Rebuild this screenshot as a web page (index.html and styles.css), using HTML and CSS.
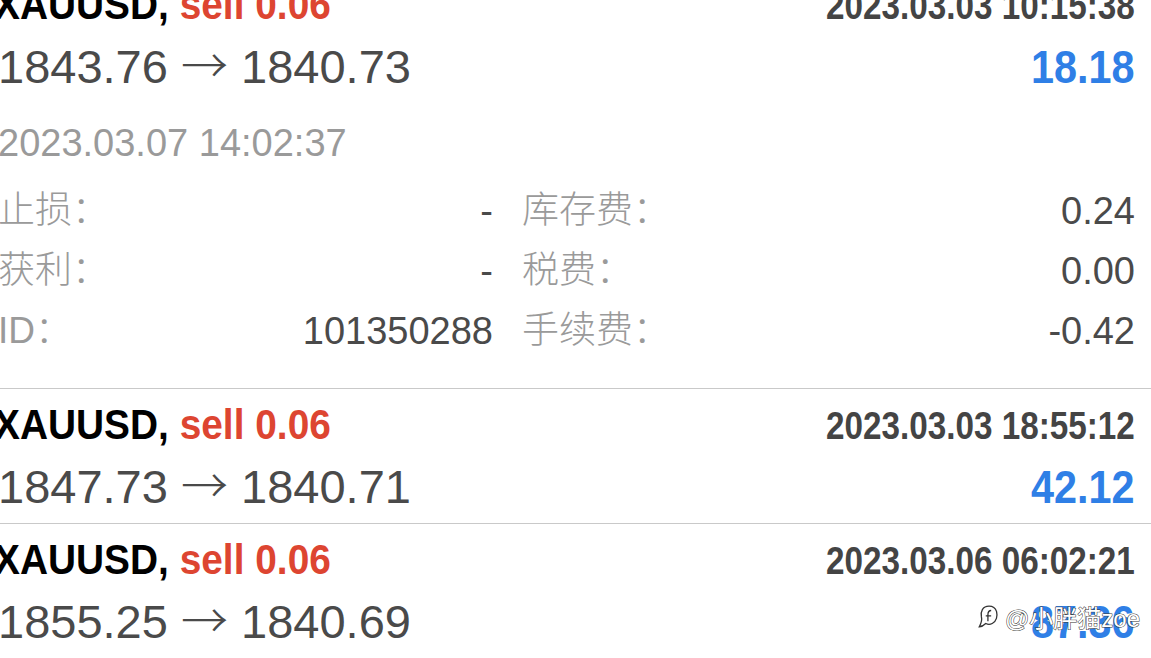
FILE: index.html
```html
<!DOCTYPE html>
<html lang="zh-CN">
<head>
    <meta charset="UTF-8">
    <meta name="viewport" content="width=device-width, initial-scale=1.0">
    <title>History</title>
    <link rel="stylesheet" href="styles.css">
</head>
<body>
    <div class="history">
        <div class="trade">
            <div class="trade-head">
                <span class="symbol">XAUUSD, <span class="side">sell 0.06</span></span>
                <span class="open-time">2023.03.03 10:15:38</span>
            </div>
            <div class="trade-prices">
                <span class="prices">1843.76 <span class="arrow">→</span> 1840.73</span>
                <span class="profit">18.18</span>
            </div>
            <div class="close-time">2023.03.07 14:02:37</div>
            <div class="details">
                <div class="cell"><span class="label">止损：</span><span class="value">-</span></div>
                <div class="cell"><span class="label">库存费：</span><span class="value">0.24</span></div>
                <div class="cell"><span class="label">获利：</span><span class="value">-</span></div>
                <div class="cell"><span class="label">税费：</span><span class="value">0.00</span></div>
                <div class="cell"><span class="label">ID：</span><span class="value">101350288</span></div>
                <div class="cell"><span class="label">手续费：</span><span class="value">-0.42</span></div>
            </div>
        </div>

        <div class="trade">
            <div class="trade-head">
                <span class="symbol">XAUUSD, <span class="side">sell 0.06</span></span>
                <span class="open-time">2023.03.03 18:55:12</span>
            </div>
            <div class="trade-prices">
                <span class="prices">1847.73 <span class="arrow">→</span> 1840.71</span>
                <span class="profit">42.12</span>
            </div>
        </div>

        <div class="trade">
            <div class="trade-head">
                <span class="symbol">XAUUSD, <span class="side">sell 0.06</span></span>
                <span class="open-time">2023.03.06 06:02:21</span>
            </div>
            <div class="trade-prices">
                <span class="prices">1855.25 <span class="arrow">→</span> 1840.69</span>
                <span class="profit">87.36</span>
            </div>
        </div>
    </div>

    <div class="watermark">
        <svg class="zhihu" width="22" height="26" viewBox="0 0 20 24">
            <path d="M10 2 C4 2 2 7 3 12 C4 16 2 19 1 21 C4 21 6 19 7 18 C9 19 11 19 13 18 C17 16 18 11 17 7 C16 4 13 2 10 2 Z" fill="none" stroke="#fff" stroke-width="3.5"/>
            <path d="M10 2 C4 2 2 7 3 12 C4 16 2 19 1 21 C4 21 6 19 7 18 C9 19 11 19 13 18 C17 16 18 11 17 7 C16 4 13 2 10 2 Z" fill="none" stroke="#333" stroke-width="1.2"/>
            <path d="M12 6 C9 6 9 8 9 10 L9 16 M7 11 L12 11" fill="none" stroke="#333" stroke-width="1.2"/>
        </svg>
        <span class="handle">@小胖猫zoe</span>
    </div>
</body>
</html>
```

FILE: styles.css
```css
body {
    margin: 0;
    background: #fff;
    font-family: "Liberation Sans", "Noto Sans CJK SC", sans-serif;
    overflow: hidden;
}

.history {
    margin: -31px 0 0 -2px; /* list is scrolled, first row half hidden */
}

.trade {
    padding: 10px 16px 0 0;
    border-bottom: 1px solid #c9c9c9;
}

.trade-head,
.trade-prices {
    display: flex;
    justify-content: space-between;
    align-items: baseline;
}

.trade-head {
    height: 52px;
    line-height: 52px;
}

/* bold text in the app is a condensed face */
.symbol,
.open-time,
.profit {
    display: inline-block;
    font-weight: bold;
}

.symbol {
    font-size: 42px;
    color: #000;
    transform: scaleX(0.925);
    transform-origin: left;
    margin-left: -4px;
}

.side {
    color: #dd4531;
}

.open-time {
    font-size: 38px;
    color: #444;
    transform: scaleX(0.875);
    transform-origin: right;
}

.trade-prices {
    height: 72px;
    line-height: 64px;
}

.prices {
    font-size: 47px;
    color: #4a4a4a;
}

.arrow {
    font-family: "Noto Sans CJK SC", sans-serif;
    font-weight: 300;
}

.profit {
    font-size: 47px;
    color: #2f7fe6;
    transform: scaleX(0.88);
    transform-origin: right;
}

.close-time {
    margin-top: 10px;
    line-height: 60px;
    font-size: 38px;
    color: #9a9a9a;
}

.details {
    display: grid;
    grid-template-columns: 495px 1fr;
    column-gap: 29px;
    margin-top: 8px;
    padding-bottom: 27px;
}

.cell {
    display: flex;
    justify-content: space-between;
    line-height: 60px;
    font-size: 38px;
}

.label {
    color: #9a9a9a;
    font-size: 37px;
    font-weight: 300;
}

.value {
    color: #4a4a4a;
}

.watermark {
    position: absolute;
    left: 978px;
    top: 599px;
    display: flex;
    align-items: center;
    gap: 5px;
}

.handle {
    font-size: 24px;
    color: #fff;
    -webkit-text-stroke: 1px #333;
    paint-order: stroke fill;
}
```
